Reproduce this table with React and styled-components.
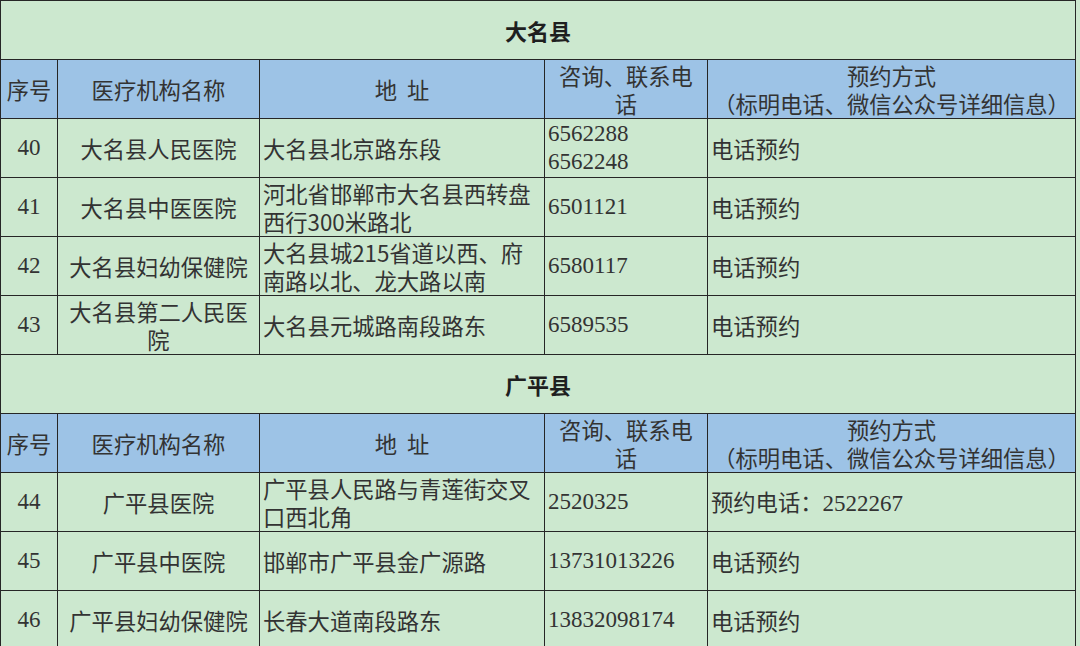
import React from "react";
import styled, { createGlobalStyle } from "styled-components";

const Global = createGlobalStyle`
  html, body { margin: 0; padding: 0; background: #cce8cf; }
  body { font-family: "Noto Sans CJK SC", "Noto Sans", sans-serif; color: #2e2e2e; }
`;

const Table = styled.table`
  width: 1075px;
  border-collapse: collapse;
  table-layout: fixed;
  background: #cce8cf;
  font-size: 22.3px;
  line-height: 28px;
`;

const Col = styled.col``;

const TitleCell = styled.td`
  height: 58px;
  border: 1px solid #262626;
  text-align: center;
  vertical-align: middle;
  font-weight: 700;
  font-size: 22px;
  color: #1f1f1f;
  padding: 0;
`;

const HeadCell = styled.td`
  height: 58px;
  background: #9dc3e6;
  border: 1px solid #262626;
  text-align: center;
  vertical-align: middle;
  padding: 0 1px;
  color: #333;
`;

const Cell = styled.td`
  height: 58px;
  border: 1px solid #262626;
  vertical-align: middle;
  text-align: ${(p) => (p.$align === "center" ? "center" : "left")};
  padding: ${(p) => (p.$align === "center" ? "0 6px" : "0 6px 0 3px")};
  font-family: ${(p) =>
    p.$serif
      ? `"Liberation Serif", "Noto Sans CJK SC", serif`
      : `"Noto Sans CJK SC", sans-serif`};
  font-size: ${(p) => (p.$serif ? "23px" : "inherit")};
  color: #333;
`;

const Num = styled.span`
  font-family: "Liberation Serif", serif;
  font-size: 23px;
`;

const sections = [
  {
    title: "大名县",
    rows: [
      ["40", "大名县人民医院", ["大名县北京路东段"], ["6562288", "6562248"], "电话预约"],
      ["41", "大名县中医医院", ["河北省邯郸市大名县西转盘", "西行300米路北"], ["6501121"], "电话预约"],
      ["42", "大名县妇幼保健院", ["大名县城215省道以西、府", "南路以北、龙大路以南"], ["6580117"], "电话预约"],
      ["43", "大名县第二人民医院", ["大名县元城路南段路东"], ["6589535"], "电话预约"],
    ],
  },
  {
    title: "广平县",
    rows: [
      ["44", "广平县医院", ["广平县人民路与青莲街交叉", "口西北角"], ["2520325"], "预约电话：2522267"],
      ["45", "广平县中医院", ["邯郸市广平县金广源路"], ["13731013226"], "电话预约"],
      ["46", "广平县妇幼保健院", ["长春大道南段路东"], ["13832098174"], "电话预约"],
    ],
  },
];

const withBreaks = (lines) =>
  lines.map((l, i) => (
    <React.Fragment key={i}>
      {i > 0 && <br />}
      {l}
    </React.Fragment>
  ));

const renderBooking = (text) => {
  const m = text.match(/^(.*：)(\d+)$/);
  if (!m) return text;
  return (
    <>
      {m[1]}
      <Num>{m[2]}</Num>
    </>
  );
};

export default function App() {
  return (
    <>
      <Global />
      <Table>
        <colgroup>
          <Col style={{ width: 57 }} />
          <Col style={{ width: 202 }} />
          <Col style={{ width: 285 }} />
          <Col style={{ width: 163 }} />
          <Col style={{ width: 368 }} />
        </colgroup>
        <tbody>
          {sections.map((s) => (
            <React.Fragment key={s.title}>
              <tr>
                <TitleCell colSpan={5}>{s.title}</TitleCell>
              </tr>
              <tr>
                <HeadCell>序号</HeadCell>
                <HeadCell>医疗机构名称</HeadCell>
                <HeadCell>地&nbsp;&nbsp;址</HeadCell>
                <HeadCell>
                  咨询、联系电
                  <br />话
                </HeadCell>
                <HeadCell>
                  预约方式
                  <br />（标明电话、微信公众号详细信息）
                </HeadCell>
              </tr>
              {s.rows.map((r) => (
                <tr key={r[0]}>
                  <Cell $align="center" $serif>
                    {r[0]}
                  </Cell>
                  <Cell $align="center">{r[1]}</Cell>
                  <Cell>{withBreaks(r[2])}</Cell>
                  <Cell $serif>{withBreaks(r[3])}</Cell>
                  <Cell>{renderBooking(r[4])}</Cell>
                </tr>
              ))}
            </React.Fragment>
          ))}
        </tbody>
      </Table>
    </>
  );
}
